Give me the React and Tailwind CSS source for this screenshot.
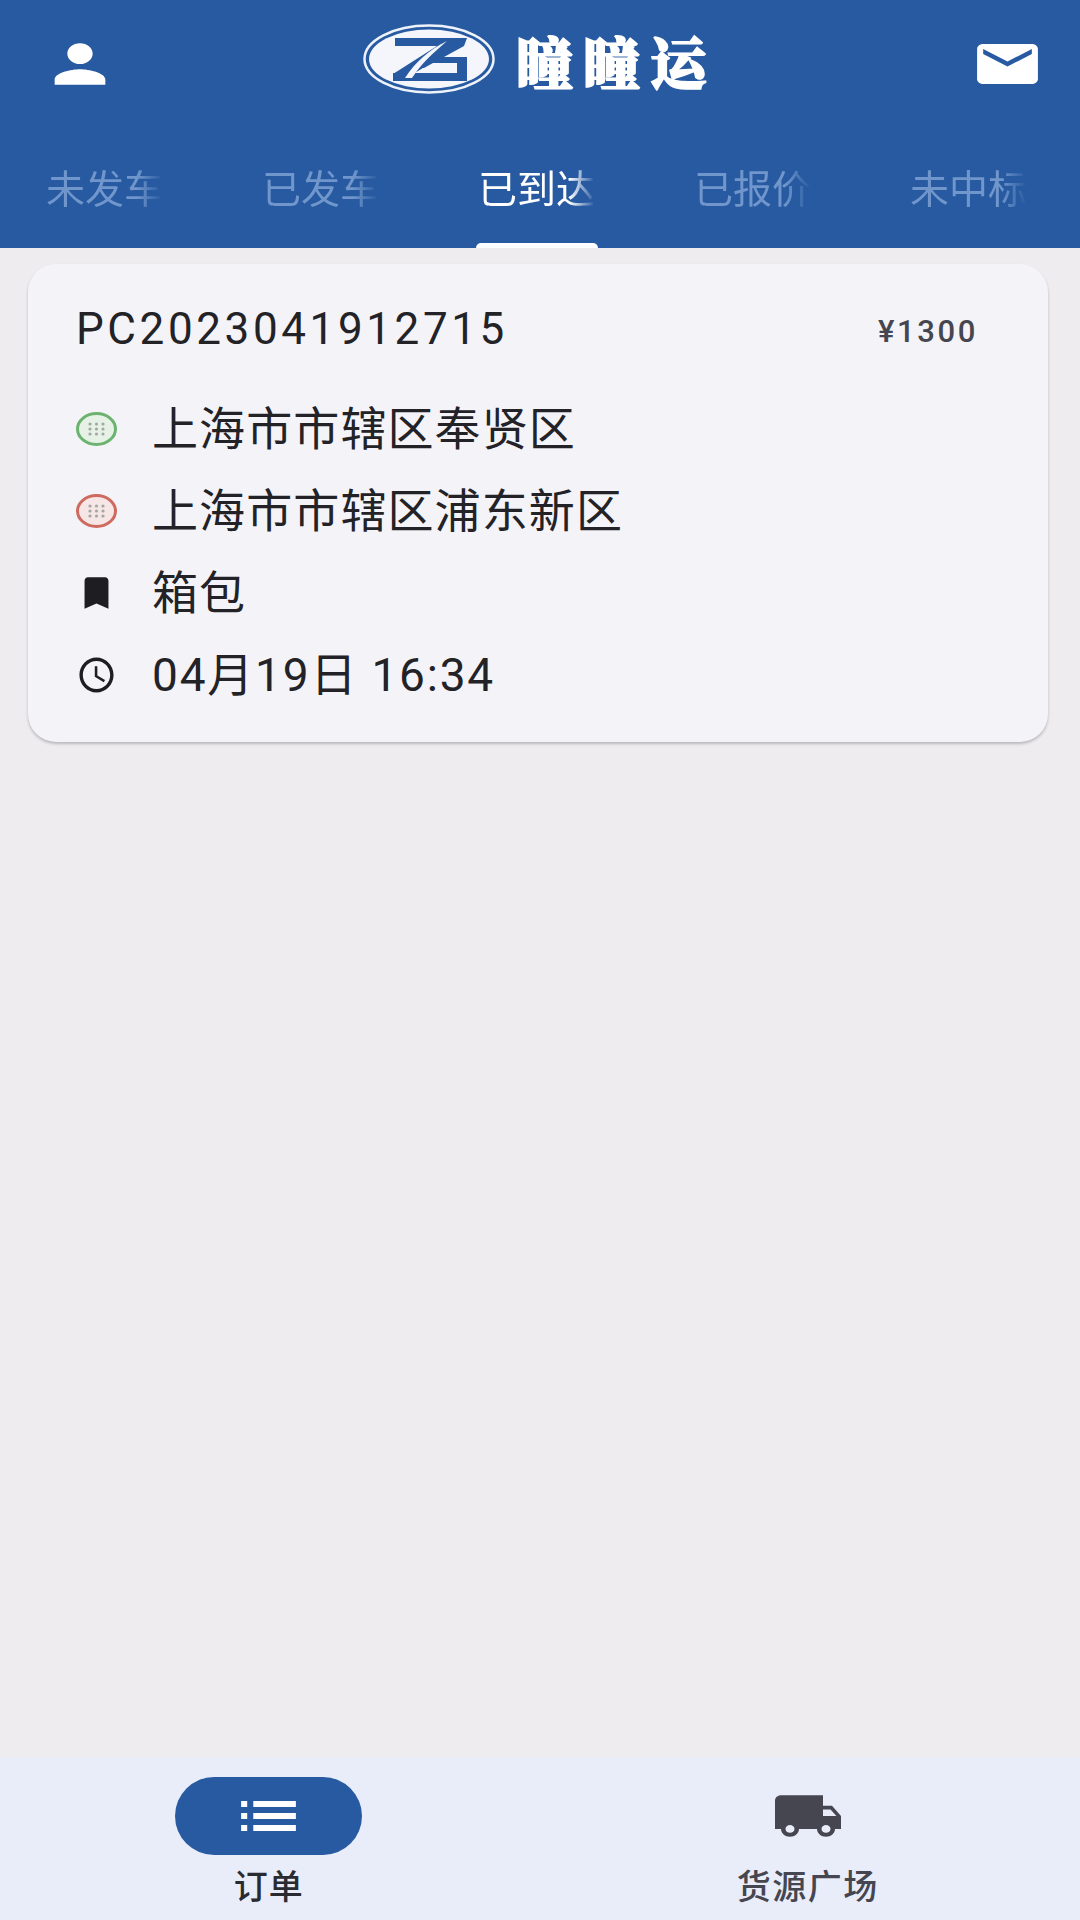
const FONT = "font-['Roboto','Noto_Sans_CJK_SC',sans-serif]";
const TABS = ['未发车', '已发车', '已到达', '已报价', '未中标'];

function Icon({ d, className }) {
  return (
    <svg viewBox="0 0 24 24" preserveAspectRatio="none" fill="currentColor" className={className}>
      <path d={d} />
    </svg>
  );
}

const person = 'M12 12c2.21 0 4-1.79 4-4s-1.79-4-4-4-4 1.79-4 4 1.79 4 4 4zm0 2c-2.67 0-8 1.34-8 4v2h16v-2c0-2.66-5.33-4-8-4z';
const mail = 'M20 4H4c-1.1 0-1.99.9-1.99 2L2 18c0 1.1.9 2 2 2h16c1.1 0 2-.9 2-2V6c0-1.1-.9-2-2-2zm0 4l-8 5-8-5V6l8 5 8-5v2z';
const bookmark = 'M17 3H7c-1.1 0-1.99.9-1.99 2L5 21l7-3 7 3V5c0-1.1-.9-2-2-2z';
const clock = 'M11.99 2C6.47 2 2 6.48 2 12s4.47 10 9.99 10C17.52 22 22 17.52 22 12S17.52 2 11.99 2zM12 20c-4.42 0-8-3.58-8-8s3.58-8 8-8 8 3.58 8 8-3.58 8-8 8zm.5-13H11v6l5.25 3.15.75-1.23-4.5-2.67z';
const list = 'M3 13h2v-2H3v2zm0 4h2v-2H3v2zm0-8h2V7H3v2zm4 4h14v-2H7v2zm0 4h14v-2H7v2zM7 7v2h14V7H7z';
const truck = 'M20 8h-3V4H3c-1.1 0-2 .9-2 2v11h2c0 1.66 1.34 3 3 3s3-1.34 3-3h6c0 1.66 1.34 3 3 3s3-1.34 3-3h2v-5l-3-4zM6 18.5c-.83 0-1.5-.67-1.5-1.5s.67-1.5 1.5-1.5 1.5.67 1.5 1.5-.67 1.5-1.5 1.5zm13.5-9l1.96 2.5H17V9.5h2.5zm-1.5 9c-.83 0-1.5-.67-1.5-1.5s.67-1.5 1.5-1.5 1.5.67 1.5 1.5-.67 1.5-1.5 1.5z';

function Logo() {
  return (
    <svg viewBox="0 0 132 70" className="w-[132px] h-[70px]">
      <ellipse cx="66" cy="35" rx="64.5" ry="33.5" fill="none" stroke="#eef2f9" strokeWidth="2.5" />
      <ellipse cx="66" cy="35" rx="60" ry="29.5" fill="#f4f6fb" />
      <g fill="#275aa1">
        <path d="M32 14H104L101 22H32z" />
        <path d="M74 22H101L50 50H30z" />
        <path d="M30 49H104V57H30z" />
        <path d="M66 33H104V39H60z" />
        <path d="M94 39H104V50H94z" />
      </g>
      <path d="M60 44H94V49H52z" fill="#f4f6fb" />
      <path d="M42 54C52 38 66 26 84 17 70 29 58 40 49 54z" fill="#f4f6fb" />
    </svg>
  );
}

// origin / destination marker, a ring with a small dot grid
function Marker({ ring, fill }) {
  const dots = [-5, 0, 5];
  return (
    <svg viewBox="0 0 41 34" className="w-[41px] h-[34px]">
      <ellipse cx="20.5" cy="17" rx="19" ry="15.5" fill={fill} stroke={ring} strokeWidth="3" />
      {dots.map((y) =>
        dots.map((x) => <circle key={`${x}${y}`} cx={20.5 + x * 1.3} cy={17 + y} r="1.6" fill="#a3a8a4" />)
      )}
    </svg>
  );
}

function Row({ icon, wide, children }) {
  return (
    <div className="flex items-center h-[82px]">
      <div className="w-[41px] flex justify-center shrink-0">{icon}</div>
      <div
        className={`ml-[35px] text-[46px] text-[#222227] whitespace-nowrap ${
          wide ? 'tracking-[1.8px]' : 'tracking-[1.1px]'
        }`}
      >
        {children}
      </div>
    </div>
  );
}

export default function App() {
  return (
    <div className={`${FONT} flex flex-col h-[1920px] w-[1080px] bg-[#eeecef] overflow-hidden`}>
      <header className="h-[248px] bg-[#275aa1] flex flex-col shrink-0">
        <div className="flex items-center justify-between h-[120px] pb-[2px] pl-[42px] pr-[36px]">
          <Icon d={person} className="w-[76px] h-[62px] mt-[10px] text-white" />
          <div className="flex items-center gap-[22px] ml-[-20px]">
            <Logo />
            <div className="text-[56px] leading-none font-black text-white tracking-[11px] -mr-[11px] mt-[2px] [-webkit-text-stroke:2px_white] font-['Noto_Serif_CJK_SC','Noto_Sans_CJK_SC',sans-serif]">
              瞳瞳运
            </div>
          </div>
          <Icon d={mail} className="w-[73px] h-[60px] mt-[10px] text-white" />
        </div>
        <div className="grid grid-cols-5 flex-1">
          {TABS.map((t, i) => (
            <div key={t} className="relative flex justify-center pt-[44px]">
              <div
                className={`w-[117px] -ml-[7px] h-[52px] overflow-hidden whitespace-nowrap text-[39px] leading-[52px] [mask-image:linear-gradient(to_right,#000_78%,transparent)] ${
                  i === 2 ? 'text-white' : 'text-[#7096cb]'
                }`}
              >
                {t}
              </div>
              {i === 2 && <div className="absolute bottom-0 left-[44px] w-[122px] h-[5px] bg-white rounded-t-[5px]" />}
            </div>
          ))}
        </div>
      </header>

      <main className="flex-1 pt-[16px] pl-[28px] pr-[32px]">
        <div className="h-[478px] rounded-[28px] bg-[#f4f3f8] shadow-[0_2px_3px_rgba(0,0,0,0.22)] pl-[48px] pr-[70px] pt-[38px]">
          <div className="flex items-center justify-between h-[54px]">
            <span className="text-[44px] tracking-[3.6px] text-[#222227]">PC2023041912715</span>
            <span className="mt-[6px] text-[31px] tracking-[2.6px] font-medium text-[#45464f]">¥1300</span>
          </div>
          <div className="mt-[32px]">
            <Row icon={<Marker ring="#6bb36f" fill="#e6f2e6" />}>上海市市辖区奉贤区</Row>
            <Row icon={<Marker ring="#cf6a60" fill="#f6e6e5" />}>上海市市辖区浦东新区</Row>
            <Row icon={<Icon d={bookmark} className="w-[49px] h-[42px] text-[#1e1e22]" />}>箱包</Row>
            <Row wide icon={<Icon d={clock} className="w-[50px] h-[42px] text-[#1e1e22]" />}>04月19日 16:34</Row>
          </div>
        </div>
      </main>

      <nav className="h-[163px] bg-[#e9edfa] grid grid-cols-2 shrink-0 pt-[20px] pr-[5px]">
        <div className="flex flex-col items-center">
          <div className="w-[187px] h-[78px] rounded-full bg-[#275aa1] flex items-center justify-center">
            <Icon d={list} className="w-[73px] h-[72px] text-white" />
          </div>
          <span className="mt-[10px] text-[34px] leading-[44px] font-medium tracking-[1px] text-[#2a2b31]">订单</span>
        </div>
        <div className="flex flex-col items-center pl-[3px]">
          <div className="h-[78px] flex items-center justify-center">
            <Icon d={truck} className="w-[72px] h-[62px] text-[#45464f]" />
          </div>
          <span className="mt-[10px] text-[34px] leading-[44px] font-medium tracking-[1.5px] text-[#45464f]">货源广场</span>
        </div>
      </nav>
    </div>
  );
}
